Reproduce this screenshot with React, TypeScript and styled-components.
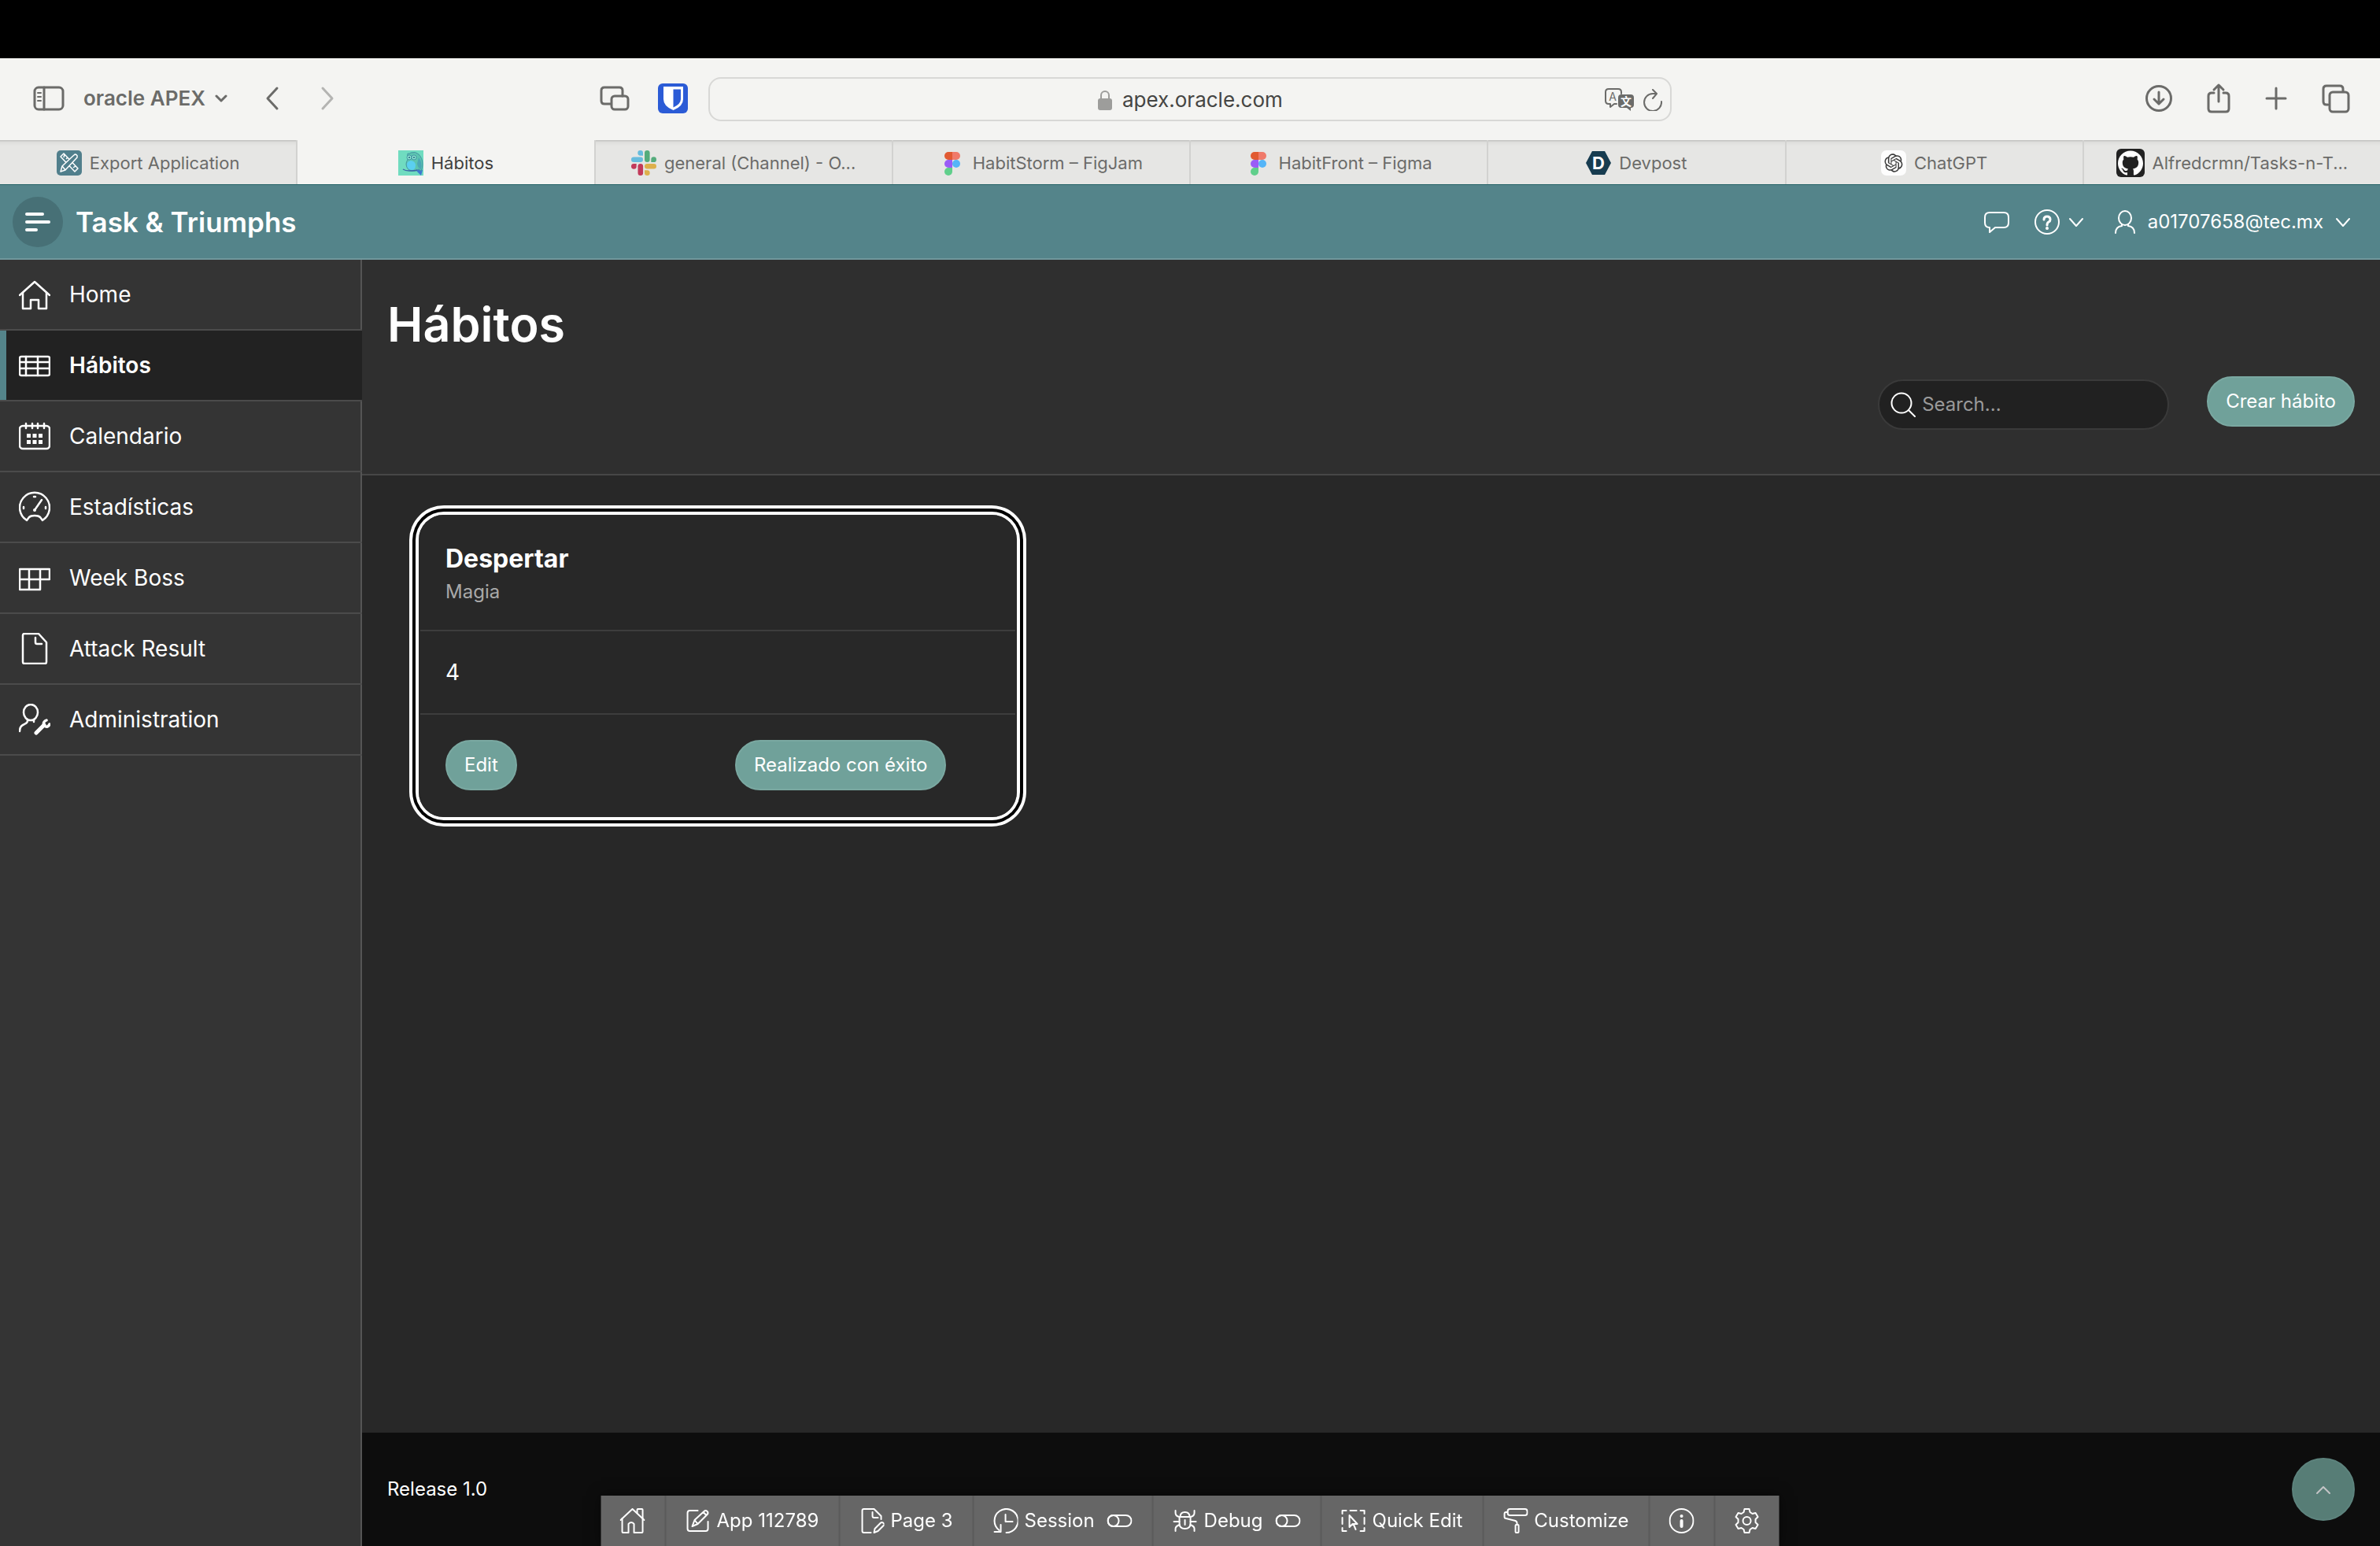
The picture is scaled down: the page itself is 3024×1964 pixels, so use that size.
import React, { ReactNode } from "react";
import styled, { createGlobalStyle, css } from "styled-components";
import { SiGithub } from "react-icons/si";
import { RiOpenaiFill } from "react-icons/ri";

const color = {
  chrome: "#f4f4f2",
  chromeInk: "#6b6b69",
  tab: "#e6e6e4",
  teal: "#54848a",
  action: "#70a19a",
  page: "#282828",
  panel: "#2f2f2f",
  sidebar: "#343434",
  line: "#4b4b4b",
};

const GlobalStyle = createGlobalStyle`
  *, *::before, *::after { box-sizing: border-box; }
  body {
    margin: 0;
    background: ${color.page};
    color: #fff;
    font-family: Inter, "Liberation Sans", sans-serif;
    font-size: 24px;
    line-height: 32px;
  }
  button, input { font: inherit; color: inherit; margin: 0; }
  svg { display: block; flex: none; }
`;

const Screen = styled.div`
  display: flex;
  flex-direction: column;
  min-height: 100vh;
`;

const MenuStrip = styled.div`
  height: 74px;
  background: #000;
`;

/* ---------- browser chrome ---------- */

const Chrome = styled.header`
  display: grid;
  grid-template-columns: minmax(0, 1fr) minmax(0, 1224px) minmax(0, 1fr);
  align-items: center;
  height: 104px;
  background: ${color.chrome};
  color: ${color.chromeInk};
`;

const ChromeGroup = styled.div<{ $gap: number; $end?: boolean }>`
  display: flex;
  align-items: center;
  gap: ${(p) => p.$gap}px;
  justify-content: ${(p) => (p.$end ? "flex-end" : "flex-start")};
`;

const ChromeLeft = styled.div`
  display: flex;
  justify-content: space-between;
  padding: 0 26px 2px 42px;
`;

const ChromeRight = styled(ChromeGroup)`
  padding: 0 38px 2px 0;
`;

const PlainButton = styled.button`
  display: flex;
  align-items: center;
  gap: 12px;
  padding: 0;
  border: 0;
  background: none;
  white-space: nowrap;
`;

const GroupButton = styled(PlainButton)`
  font-size: 26px;
  font-weight: 600;
`;

const NavButtons = styled(ChromeGroup)`
  padding-left: 24px;
`;

const AddressBar = styled.label`
  display: grid;
  grid-template-columns: 1fr auto 1fr;
  align-items: center;
  height: 56px;
  padding: 2px 10px 0;
  border: 2px solid #d8d8d6;
  border-radius: 16px;
`;

const AddressText = styled.span`
  grid-column: 2;
  display: flex;
  align-items: center;
  gap: 12px;
`;

const AddressInput = styled.input`
  width: 204px;
  padding: 0;
  border: 0;
  outline: 0;
  background: none;
  color: #454543;
  font-size: 26px;
`;

const TabStrip = styled.div`
  display: flex;
  height: 56px;
  background: ${color.tab};
`;

const Tab = styled.button<{ $active?: boolean }>`
  flex: 1 1 0;
  min-width: 0;
  display: flex;
  align-items: center;
  justify-content: center;
  gap: 10px;
  padding: 2px 0 0;
  border: 0;
  border-left: 2px solid #d2d2d0;
  background: linear-gradient(#c4c4c2 1px, #dcdcda 2px, ${color.tab} 7px);
  color: #6b6b69;
  font-size: 22px;
  white-space: nowrap;
  &:first-child { border-left: 0; }
  ${(p) =>
    p.$active &&
    css`
      background: ${color.chrome};
      color: #40403e;
    `}
`;

/* ---------- application ---------- */

const AppBar = styled.header`
  display: flex;
  align-items: center;
  gap: 16px;
  height: 96px;
  padding: 0 38px 0 16px;
  background: ${color.teal};
  border-top: 1px solid #276468;
  border-bottom: 2px solid #70979c;
`;

const MenuButton = styled(PlainButton)`
  justify-content: center;
  width: 64px;
  height: 64px;
  border-radius: 50%;
  background: #477076;
`;

const Brand = styled.a`
  color: #fff;
  text-decoration: none;
  font-size: 35px;
  line-height: 48px;
  font-weight: 600;
`;

const AppActions = styled.div`
  display: flex;
  align-items: center;
  margin-left: auto;
  gap: 32px;
`;

const AccountButton = styled(PlainButton)`
  gap: 16px;
  padding-left: 8px;
`;

const Body = styled.div`
  flex: 1;
  display: flex;
`;

const Sidebar = styled.nav`
  flex: none;
  width: 460px;
  background: ${color.sidebar};
  box-shadow: inset -2px 0 #555;
`;

const NavItem = styled.a<{ $active?: boolean }>`
  display: flex;
  align-items: center;
  gap: 24px;
  height: 90px;
  padding: 0 24px;
  border-bottom: 2px solid ${color.line};
  color: #fff;
  text-decoration: none;
  font-size: 28px;
  line-height: 40px;
  ${(p) =>
    p.$active &&
    css`
      font-weight: 600;
      background: linear-gradient(90deg, ${color.teal} 8px, #222 8px);
    `}
`;

const Main = styled.main`
  flex: 1;
  min-width: 0;
  display: flex;
  flex-direction: column;
`;

const PageHeader = styled.div`
  padding: 44px 32px 52px;
  background: ${color.panel};
  border-bottom: 2px solid #474747;
`;

const PageTitle = styled.h1`
  margin: 0 0 28px;
  font-size: 61px;
  line-height: 76px;
  font-weight: 600;
`;

const PageActions = styled.div`
  display: flex;
  justify-content: flex-end;
  align-items: flex-start;
  gap: 48px;
`;

const SearchForm = styled.form`
  padding: 4px 0;
`;

const SearchBox = styled.label`
  display: flex;
  align-items: center;
  gap: 8px;
  width: 370px;
  height: 64px;
  padding: 0 14px;
  border: 2px solid #3a3a3a;
  border-radius: 32px;
  background: #212121;
`;

const SearchInput = styled.input`
  flex: 1;
  min-width: 0;
  padding: 0;
  border: 0;
  outline: 0;
  background: none;
  &::placeholder { color: #9a9a9a; opacity: 1; }
`;

const ActionButton = styled.button`
  height: 64px;
  padding: 0 22px;
  border: 2px solid #7aa8a1;
  border-radius: 32px;
  background: ${color.action};
  white-space: nowrap;
`;

const CardGrid = styled.div`
  flex: 1;
  display: grid;
  grid-template-columns: repeat(3, minmax(0, 1fr));
  align-items: start;
  gap: 70px;
  padding: 50px 72px;
`;

const Card = styled.article`
  border: 2px solid ${color.page};
  border-radius: 32px;
  box-shadow: 0 0 0 4px #fff, 0 0 0 8px #000, 0 0 0 12px #fff;
`;

const CardSection = styled.div`
  padding: 32px;
  & + & { border-top: 2px solid #3d3d3d; }
`;

const CardTitle = styled.h2`
  margin: 0 0 4px;
  font-size: 32px;
  line-height: 44px;
  font-weight: 700;
`;

const CardSubtitle = styled.p`
  margin: 0;
  color: #a9a9a9;
`;

const CardValue = styled.p`
  margin: 0;
  font-size: 28px;
  line-height: 40px;
`;

const CardActions = styled(CardSection)`
  display: grid;
  grid-template-columns: 1fr 1fr;
  justify-items: start;
  gap: 44px;
`;

const Footer = styled.footer`
  display: flex;
  align-items: center;
  height: 144px;
  padding: 0 32px;
  background: #0d0d0d;
`;

const ToTop = styled.a`
  display: grid;
  place-items: center;
  width: 80px;
  height: 80px;
  margin-left: auto;
  border: 2px solid #5d837d;
  border-radius: 50%;
  background: #577d76;
  color: #c4c4c6;
`;

const DevToolbar = styled.div`
  position: fixed;
  bottom: 0;
  left: 50%;
  transform: translateX(-50%);
  display: flex;
  height: 64px;
  background: #666;
  box-shadow: 0 0 16px rgba(0, 0, 0, 0.5);
`;

const DevButton = styled.button`
  display: flex;
  align-items: center;
  gap: 8px;
  padding: 0 25px 0 24px;
  border: 0;
  border-right: 2px solid #5b5b5b;
  background: none;
  white-space: nowrap;
  &:last-child { border-right: 0; }
`;

const DevLabel = styled.span<{ $toggle?: boolean }>`
  padding-right: ${(p) => (p.$toggle ? 8 : 0)}px;
`;

/* ---------- drawings ---------- */

type GlyphProps = { w: number; h?: number; sw?: number; children: ReactNode };

const Glyph = ({ w, h = w, sw = 2, children }: GlyphProps) => (
  <svg
    width={w}
    height={h}
    viewBox={`0 0 ${w} ${h}`}
    fill="none"
    stroke="currentColor"
    strokeWidth={sw}
    strokeLinecap="round"
    strokeLinejoin="round"
    aria-hidden="true"
  >
    {children}
  </svg>
);

const Chevron = () => (
  <Glyph w={18} h={12}>
    <path d="M1 2l8 9 8-9" />
  </Glyph>
);

const ToggleIcon = () => (
  <Glyph w={32}>
    <rect x="1" y="9" width="30" height="14" rx="7" />
    <circle cx="8" cy="16" r="7" />
  </Glyph>
);

const ExportFavicon = () => (
  <svg width="32" height="32" viewBox="0 0 32 32" aria-hidden="true">
    <rect width="32" height="32" rx="5" fill="#517f8c" />
    <g fill="none" stroke="#fff" strokeWidth="1.5" strokeLinejoin="round">
      <path d="M5 8l4-4 18 19-4 4zM10 5l-1 4M14 9l-2 2M24 20l-3 2" />
      <path d="M22 6c2-2 5 0 4 3L11 25l-6 2 2-7z" fill="#517f8c" />
      <path d="M7 20l4 5" />
    </g>
  </svg>
);

const OwlFavicon = () => (
  <svg width="32" height="32" viewBox="0 0 32 32" aria-hidden="true">
    <rect width="32" height="32" fill="#70dcc0" />
    <path d="M23 21l8 4-2 7-6-6z" fill="#3f78cf" />
    <path
      d="M12 4q2 1 4-1 6-2 10 2 5 5 5 13 0 5-2 8l-3-2q-4 3-9 2-6-1-7-8 0-4 2-6-1-4 0-8z"
      fill="#5cc4b0"
      stroke="#4596a4"
      strokeWidth="1"
    />
    <path d="M26 9q5 7 3 15-4-1-5-7z" fill="#4ca7b4" />
    <path d="M11 18q0-4 5-5 6 1 6 6 0 6-5 6-6-1-6-7z" fill="#5bcff0" />
    <circle cx="14" cy="9" r="3" fill="#8ce6d0" stroke="#4596a4" strokeWidth="1" />
    <circle cx="20" cy="9" r="3" fill="#8ce6d0" stroke="#4596a4" strokeWidth="1" />
    <circle cx="14" cy="9" r="1" fill="#255b80" />
    <circle cx="20" cy="9" r="1" fill="#255b80" />
    <path d="M6 24q3 2 8 2 7 0 10-1" stroke="#3b64a8" strokeWidth="1.5" fill="none" />
  </svg>
);

const SlackFavicon = () => (
  <svg width="32" height="32" viewBox="0 0 32 32" aria-hidden="true">
    <g fill="#67bcdd">
      <rect x="0" y="8.5" width="15" height="6.6" rx="3.3" />
      <path d="M15 6.7h-3.300a3.350 3.350 0 1 1 3.300-3.300z" />
    </g>
    <g fill="#54ac7c">
      <rect x="17" y="0" width="6.600" height="15" rx="3.3" />
      <path d="M25.300 15v-3.300a3.350 3.350 0 1 1 3.300 3.300z" />
    </g>
    <g fill="#ddb04c">
      <rect x="17" y="17" width="15" height="6.600" rx="3.300" />
      <path d="M17 25.300h3.300a3.350 3.350 0 1 1-3.300 3.300z" />
    </g>
    <g fill="#c23a5a">
      <rect x="8.500" y="17" width="6.600" height="15" rx="3.300" />
      <path d="M6.700 17v3.300a3.350 3.350 0 1 1-3.300-3.300z" />
    </g>
  </svg>
);

const FigmaFavicon = () => (
  <svg width="32" height="32" viewBox="0 0 32 32" aria-hidden="true">
    <path d="M16 2h-5a5 5 0 0 0 0 10h5z" fill="#e15a32" />
    <path d="M16 2h5a5 5 0 0 1 0 10h-5z" fill="#f07a6a" />
    <path d="M16 12h-5a5 5 0 0 0 0 10h5z" fill="#9a5cf6" />
    <circle cx="21" cy="17" r="5" fill="#55b5f8" />
    <path d="M16 22h-5a5 5 0 1 0 5 5z" fill="#60cf8b" />
  </svg>
);

const DevpostFavicon = () => (
  <svg width="32" height="32" viewBox="0 0 32 32" aria-hidden="true">
    <path d="M8 1h16l8 15-8 15H8L0 16z" fill="#173c50" />
    <text x="16" y="24" textAnchor="middle" fontSize="22" fontWeight="700" fill="#fff" fontFamily="Inter, sans-serif">D</text>
  </svg>
);

const ChatFavicon = () => (
  <svg width="32" height="32" viewBox="0 0 32 32" aria-hidden="true">
    <rect width="32" height="32" rx="7" fill="#fdfdfd" />
    <RiOpenaiFill x="2" y="2" size={28} color="#3c3c3c" />
  </svg>
);

const GithubFavicon = () => (
  <svg width="36" height="36" viewBox="0 0 36 36" aria-hidden="true">
    <rect width="36" height="36" rx="6" fill="#222" />
    <SiGithub x="2" y="2" size={32} color="#fff" />
  </svg>
);

const navIcons = {
  home: (
    <>
      <path d="M1 21L20 4l19 17" />
      <path d="M5 18v20h10V27h10v11h10V18" />
    </>
  ),
  table: (
    <>
      <rect x="1" y="9" width="38" height="24" rx="2" />
      <path d="M1 16h38M1 24h38M9 9v24M24 9v24" />
    </>
  ),
  calendar: (
    <>
      <rect x="1" y="7" width="38" height="29" rx="4" />
      <path d="M9 4v6M17 4v6M24 4v6M32 4v6" />
      <path
        d="M10 17h5v5h-5zM17.500 17h5v5h-5zM25 17h5v5h-5zM10 25h5v5h-5zM17.500 25h5v5h-5zM25 25h5v5h-5z"
        fill="currentColor"
        stroke="none"
      />
    </>
  ),
  gauge: (
    <>
      <path d="M10 37A19 19 0 1 1 30 37L27 33Q25 31 20 31T13 33z" />
      <path d="M20 24l9-13M19 7h2M6 20v2M34 20v2" />
      <circle cx="20" cy="24" r="2" fill="currentColor" stroke="none" />
    </>
  ),
  blocks: <path d="M1 9h38v13H1zM1 22v13h26V9M13 9v26" />,
  file: (
    <>
      <path d="M7 1h18l10 11v25a2 2 0 0 1-2 2H7a2 2 0 0 1-2-2V3a2 2 0 0 1 2-2z" />
      <path d="M21 6v6q0 2 2 2h6" />
    </>
  ),
  admin: (
    <>
      <ellipse cx="15" cy="11" rx="9" ry="10" />
      <path d="M11 20v2q0 2-4 4-6 2-6 9M19 20v3" />
      <path d="M22 37l10-10" strokeWidth="5" />
      <path d="M35 21q-5 2-3 7 5 3 7-2" strokeWidth="3.500" />
    </>
  ),
};

const navItems: { icon: keyof typeof navIcons; label: string; active?: boolean }[] = [
  { icon: "home", label: "Home" },
  { icon: "table", label: "Hábitos", active: true },
  { icon: "calendar", label: "Calendario" },
  { icon: "gauge", label: "Estadísticas" },
  { icon: "blocks", label: "Week Boss" },
  { icon: "file", label: "Attack Result" },
  { icon: "admin", label: "Administration" },
];

const tabs: { icon: ReactNode; label: string; active?: boolean }[] = [
  { icon: <ExportFavicon />, label: "Export Application" },
  { icon: <OwlFavicon />, label: "Hábitos", active: true },
  { icon: <SlackFavicon />, label: "general (Channel) - O..." },
  { icon: <FigmaFavicon />, label: "HabitStorm – FigJam" },
  { icon: <FigmaFavicon />, label: "HabitFront – Figma" },
  { icon: <DevpostFavicon />, label: "Devpost" },
  { icon: <ChatFavicon />, label: "ChatGPT" },
  { icon: <GithubFavicon />, label: "Alfredcrmn/Tasks-n-T..." },
];

const devItems: { name: string; label?: string; toggle?: boolean; icon: ReactNode }[] = [
  {
    name: "Home",
    icon: (
      <>
        <path d="M1 15L16 1l15 14" />
        <path d="M3 13v17q0 1 1 1h7V20a4 4 0 0 1 7 0v11h10q1 0 1-1V13M22 6V2q0-1 1-1h5q1 0 1 1v11" />
      </>
    ),
  },
  {
    name: "Application",
    label: "App 112789",
    icon: (
      <>
        <path d="M16 3H6Q3 3 3 6v20q0 3 3 3h20q3 0 3-3V17" />
        <path d="M9 23l3-8L24 4q2-2 4 0t0 4L16 20zM12 15l4 5M23 5l4 4" />
      </>
    ),
  },
  {
    name: "Page",
    label: "Page 3",
    icon: (
      <>
        <path d="M15 31H6q-2 0-2-2V3q0-2 2-2h13l9 9v4M17 5v5q0 2 2 2h5" />
        <path d="M19 31l1-5 7-7q2-2 4 0t0 3l-7 7z" />
      </>
    ),
  },
  {
    name: "Session",
    label: "Session",
    toggle: true,
    icon: (
      <>
        <path d="M17 31A15 15 0 1 0 8 28M16 8v9h9" />
        <path d="M10 21v9H2" />
      </>
    ),
  },
  {
    name: "Debug",
    label: "Debug",
    toggle: true,
    icon: (
      <>
        <path d="M9 11h14v8q0 7-7 7t-7-7zM10 11q0-6 6-6t6 6M16 15v6" />
        <path d="M4 3v3q0 4 5 5M28 3v3q0 4-5 5M2 17h7M23 17h7M4 29v-3q0-3 5-5M28 29v-3q0-3-5-5" />
      </>
    ),
  },
  {
    name: "Quick edit",
    label: "Quick Edit",
    icon: (
      <>
        <path d="M2 7V3h5M12 3h8M25 3h5v4M30 12v8M30 25v4h-5M7 29H2v-4M2 12v8" />
        <path d="M11 9l10 11h-5l3 7M11 9v15l4-4" />
      </>
    ),
  },
  {
    name: "Customize",
    label: "Customize",
    icon: (
      <>
        <rect x="6" y="1" width="25" height="8" rx="3" />
        <path d="M6 5H4Q2 5 2 7v4q0 2 2 2l12 3q2 1 2 3v2" />
        <rect x="16" y="21" width="4" height="10" rx="1" />
      </>
    ),
  },
  {
    name: "Information",
    icon: (
      <>
        <circle cx="16" cy="16" r="15" />
        <path d="M16 16v7" strokeWidth="4" />
        <circle cx="16" cy="10" r="2" fill="currentColor" stroke="none" />
      </>
    ),
  },
  {
    name: "Settings",
    icon: (
      <>
        <path d="M13 1h6l1 4 3 2 4-1 3 5-3 3v4l3 3-3 5-4-1-3 2-1 4h-6l-1-4-3-2-4 1-3-5 3-3v-4l-3-3 3-5 4 1 3-2z" />
        <circle cx="16" cy="16" r="5" />
      </>
    ),
  },
];

export default function App() {
  return (
    <Screen>
      <GlobalStyle />
      <MenuStrip />

      <Chrome>
        <ChromeLeft>
          <ChromeGroup $gap={24}>
            <PlainButton aria-label="Show sidebar">
              <Glyph w={40} h={32} sw={3}>
                <rect x="2" y="2" width="36" height="28" rx="5" />
                <path d="M14 2v28" />
                <path d="M6 9h4M6 14h4M6 19h4" strokeWidth="2" />
              </Glyph>
            </PlainButton>
            <GroupButton>
              oracle APEX
              <Glyph w={16} h={12} sw={3}>
                <path d="M2 3l6 6 6-6" />
              </Glyph>
            </GroupButton>
            <NavButtons $gap={52}>
              <PlainButton aria-label="Back">
                <Glyph w={18} h={32} sw={3}>
                  <path d="M15 3L3 16l12 13" />
                </Glyph>
              </PlainButton>
              <PlainButton aria-label="Forward" disabled>
                <Glyph w={18} h={32} sw={3}>
                  <path d="M3 3l12 13L3 29" stroke="#b4b4b2" />
                </Glyph>
              </PlainButton>
            </NavButtons>
          </ChromeGroup>
          <ChromeGroup $gap={36}>
            <PlainButton aria-label="Picture in picture">
              <Glyph w={38} h={32} sw={3}>
                <path d="M14 23H6q-4 0-4-4V6q0-4 4-4h19q4 0 4 4v7" />
                <rect x="15" y="13" width="21" height="17" rx="4" />
              </Glyph>
            </PlainButton>
            <PlainButton aria-label="Bitwarden">
              <svg width="38" height="38" viewBox="0 0 38 38" aria-hidden="true">
                <rect width="38" height="38" rx="6" fill="#2b5bd6" />
                <path d="M7 4h25v16q0 9-12.500 14Q7 29 7 20z" fill="#fff" />
                <path d="M19.500 7.500H29V20q0 6-9.500 10.500z" fill="#2b5bd6" />
              </svg>
            </PlainButton>
          </ChromeGroup>
        </ChromeLeft>

        <AddressBar>
          <AddressText>
            <svg width="20" height="26" viewBox="0 0 20 26" aria-hidden="true">
              <rect x="1" y="11" width="18" height="15" rx="3" fill="#9d9d9b" />
              <path d="M5 12V7a5 5 0 0 1 10 0v5" fill="none" stroke="#9d9d9b" strokeWidth="2" />
            </svg>
            <AddressInput defaultValue="apex.oracle.com" aria-label="Address" />
          </AddressText>
          <ChromeGroup $gap={10} $end>
            <PlainButton aria-label="Translate">
              <Glyph w={40} h={30}>
                <path d="M16 20h-3l-5 4v-4H6q-4 0-4-4V5q0-4 4-4h12q4 0 4 4v2" />
                <path d="M22 8h12q4 0 4 4v9q0 4-4 4v4l-5-4h-7q-4 0-4-4v-9q0-4 4-4z" fill="currentColor" stroke="none" />
                <text x="11" y="16" textAnchor="middle" fontSize="14" fill="currentColor" stroke="none">A</text>
                <text x="28" y="22" textAnchor="middle" fontSize="14" fontWeight="700" fill="#fff" stroke="none" fontFamily="Noto Sans CJK SC, sans-serif">文</text>
              </Glyph>
            </PlainButton>
            <PlainButton aria-label="Reload">
              <Glyph w={24} h={28}>
                <path d="M23 16A11 11 0 1 1 12 6h4M12 1l5 5-5 6" />
              </Glyph>
            </PlainButton>
          </ChromeGroup>
        </AddressBar>

        <ChromeRight $gap={44} $end>
          <PlainButton aria-label="Downloads">
            <Glyph w={34} h={40} sw={3}>
              <circle cx="17" cy="20" r="15.500" />
              <path d="M17 12v15M11 21l6 6 6-6" />
            </Glyph>
          </PlainButton>
          <PlainButton aria-label="Share">
            <Glyph w={30} h={40} sw={3}>
              <path d="M9 13H6q-4 0-4 4v16q0 4 4 4h18q4 0 4-4V17q0-4-4-4h-3M15 24V3M9 9l6-6 6 6" />
            </Glyph>
          </PlainButton>
          <PlainButton aria-label="New tab">
            <Glyph w={28} h={40} sw={3}>
              <path d="M14 7v26M2 20h24" />
            </Glyph>
          </PlainButton>
          <PlainButton aria-label="Tab overview">
            <Glyph w={36} h={40} sw={3}>
              <path d="M8 28H6q-4 0-4-4V8q0-4 4-4h17q4 0 4 4v3" />
              <rect x="10" y="12" width="24" height="25" rx="4" />
            </Glyph>
          </PlainButton>
        </ChromeRight>
      </Chrome>

      <TabStrip role="tablist">
        {tabs.map((t) => (
          <Tab key={t.label} role="tab" aria-selected={!!t.active} $active={t.active}>
            {t.icon}
            {t.label}
          </Tab>
        ))}
      </TabStrip>

      <AppBar>
        <MenuButton aria-label="Main menu">
          <Glyph w={32} sw={4}>
            <path d="M2 6h20M2 16h28M2 26h12" />
          </Glyph>
        </MenuButton>
        <Brand href="#home">Task &amp; Triumphs</Brand>
        <AppActions>
          <PlainButton aria-label="Feedback">
            <Glyph w={32}>
              <path d="M7 4h18q6 0 6 6v7q0 6-6 6H14l-7 6v-6q-6 0-6-6v-7q0-6 6-6z" />
            </Glyph>
          </PlainButton>
          <PlainButton aria-label="Help">
            <Glyph w={32}>
              <circle cx="16" cy="16" r="15" />
              <path d="M12 13q0-4 4-4t4 4q0 2-2 3t-2 4" strokeWidth="3" />
              <circle cx="16" cy="24" r="2" fill="currentColor" stroke="none" />
            </Glyph>
            <Chevron />
          </PlainButton>
          <AccountButton>
            <Glyph w={26} h={30}>
              <ellipse cx="13" cy="10" rx="8" ry="9" />
              <path d="M9 18v2q-8 1-8 9M17 18v2q8 1 8 9" />
            </Glyph>
            a01707658@tec.mx
            <Chevron />
          </AccountButton>
        </AppActions>
      </AppBar>

      <Body>
        <Sidebar aria-label="Main">
          {navItems.map((n) => (
            <NavItem key={n.label} href={`#${n.icon}`} $active={n.active}>
              <Glyph w={40} sw={2.5}>{navIcons[n.icon]}</Glyph>
              {n.label}
            </NavItem>
          ))}
        </Sidebar>

        <Main>
          <PageHeader>
            <PageTitle>Hábitos</PageTitle>
            <PageActions>
              <SearchForm role="search">
                <SearchBox>
                  <Glyph w={32}>
                    <circle cx="14" cy="14" r="12.500" />
                    <path d="M23 23l8 8" />
                  </Glyph>
                  <SearchInput type="text" placeholder="Search..." aria-label="Search" />
                </SearchBox>
              </SearchForm>
              <ActionButton>Crear hábito</ActionButton>
            </PageActions>
          </PageHeader>

          <CardGrid>
            <Card>
              <CardSection>
                <CardTitle>Despertar</CardTitle>
                <CardSubtitle>Magia</CardSubtitle>
              </CardSection>
              <CardSection>
                <CardValue>4</CardValue>
              </CardSection>
              <CardActions>
                <ActionButton>Edit</ActionButton>
                <ActionButton>Realizado con éxito</ActionButton>
              </CardActions>
            </Card>
          </CardGrid>

          <Footer>
            Release 1.0
            <ToTop href="#top" aria-label="Start of page">
              <Glyph w={20} h={14}>
                <path d="M2 12l8-8 8 8" />
              </Glyph>
            </ToTop>
          </Footer>
        </Main>
      </Body>

      <DevToolbar role="toolbar" aria-label="Developer toolbar">
        {devItems.map((d) => (
          <DevButton key={d.name} aria-label={d.label ? undefined : d.name}>
            <Glyph w={32}>{d.icon}</Glyph>
            {d.label && <DevLabel $toggle={d.toggle}>{d.label}</DevLabel>}
            {d.toggle && <ToggleIcon />}
          </DevButton>
        ))}
      </DevToolbar>
    </Screen>
  );
}
